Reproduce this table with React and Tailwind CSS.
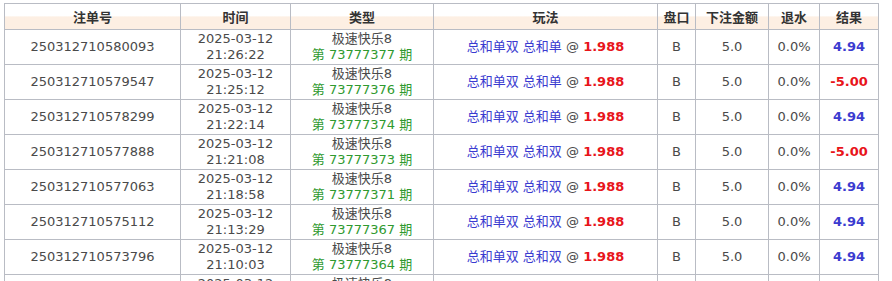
import React from "react";

const rows = [
  ["250312710580093", "21:26:22", "73777377", "总和单", "4.94"],
  ["250312710579547", "21:25:12", "73777376", "总和单", "-5.00"],
  ["250312710578299", "21:22:14", "73777374", "总和单", "4.94"],
  ["250312710577888", "21:21:08", "73777373", "总和双", "-5.00"],
  ["250312710577063", "21:18:58", "73777371", "总和双", "4.94"],
  ["250312710575112", "21:13:29", "73777367", "总和双", "4.94"],
  ["250312710573796", "21:10:03", "73777364", "总和双", "4.94"],
  ["250312710572001", "21:06:41", "73777361", "总和双", "4.94"],
];

const heads = ["注单号", "时间", "类型", "玩法", "盘口", "下注金额", "退水", "结果"];
const widths = ["w-[176px]", "w-[110px]", "w-[143px]", "w-[224px]", "w-[38px]", "w-[73px]", "w-[51px]", "w-[59px]"];

export default function App() {
  return (
    <div className="w-[892px] h-[281px] overflow-hidden bg-white pt-[3px] pl-[4px]" style={{ fontFamily: '"DejaVu Sans", Verdana, "Noto Sans CJK SC", sans-serif' }}>
      <table className="border-collapse table-fixed w-[875px] text-[13px] text-[#4a4a4a] leading-[16px]">
        <colgroup>
          {widths.map((w, i) => (
            <col key={i} className={w} />
          ))}
        </colgroup>
        <thead>
          <tr className="h-[26px] bg-[linear-gradient(to_bottom,#ffffff_0%,#ffffff_45%,#fdefe3_50%,#fdefe3_100%)]">
            {heads.map((h) => (
              <th key={h} className="border border-[#b9bcc4] font-bold text-[#333] text-center p-0" style={{ fontFamily: '"Noto Sans CJK SC", sans-serif' }}>
                {h}
              </th>
            ))}
          </tr>
        </thead>
        <tbody>
          {rows.map((r) => (
            <tr key={r[0]} className="h-[35px]">
              <td className="border border-[#b9bcc4] text-center p-0">{r[0]}</td>
              <td className="border border-[#b9bcc4] text-center p-0">
                <div>2025-03-12</div>
                <div>{r[1]}</div>
              </td>
              <td className="border border-[#b9bcc4] text-center p-0">
                <div>极速快乐8</div>
                <div className="text-[#2f9a2f]">第 {r[2]} 期</div>
              </td>
              <td className="border border-[#b9bcc4] text-center p-0">
                <span className="text-[#3b3bd0]">总和单双 {r[3]}</span>
                <span> @ </span>
                <span className="text-[#e8141a] font-bold">1.988</span>
              </td>
              <td className="border border-[#b9bcc4] text-center p-0">B</td>
              <td className="border border-[#b9bcc4] text-center p-0">5.0</td>
              <td className="border border-[#b9bcc4] text-center p-0">0.0%</td>
              <td className={"border border-[#b9bcc4] text-center p-0 font-bold " + (r[4].startsWith("-") ? "text-[#e8141a]" : "text-[#3b3bd0]")}>
                {r[4]}
              </td>
            </tr>
          ))}
        </tbody>
      </table>
    </div>
  );
}
